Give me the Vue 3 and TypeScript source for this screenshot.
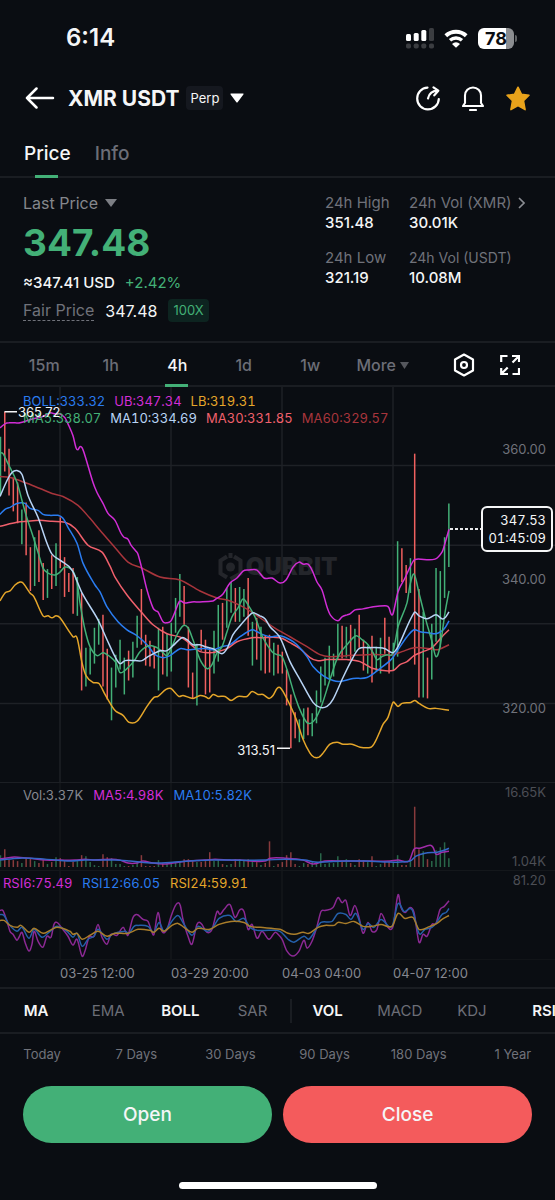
<script setup lang="ts">
import { ref } from 'vue'

type Point = [number, number]
interface Series { name: string; color: string; d: string }
interface Label { text: string; color: string }

const activeView = ref('Price')
const activeInterval = ref('4h')
const views = ['Price', 'Info']
const intervals = ['15m', '1h', '4h', '1d', '1w']
const overlays = ref([
  { name: 'MA', on: true },
  { name: 'EMA', on: false },
  { name: 'BOLL', on: true },
  { name: 'SAR', on: false },
])
const oscillators = ref([
  { name: 'VOL', on: true },
  { name: 'MACD', on: false },
  { name: 'KDJ', on: false },
  { name: 'RSI', on: true },
])
const ranges = ['Today', '7 Days', '30 Days', '90 Days', '180 Days', '1 Year']

const CHART_WIDTH = 555
const FIRST_X = 0.5
const STEP = 4.27
const VOLUME_BASE = 868

const gridX = [60, 171, 282, 393]
const gridY = [465, 545, 624, 704]
const dates = ['03-25 12:00', '03-29 20:00', '04-03 04:00', '04-07 12:00']
const percent = (x: number) => `${(x / CHART_WIDTH) * 100}%`

// One entry per candle: direction, top, bottom, top of the volume bar
const candleData = `
G 436 495 856|R 411 471 850|R 448 495 861|R 477 511 861|R 482 523 862|G 509 544 864|R 502 555 859|R 547 591 859
G 537 586 862|R 530 582 864|R 563 600 861|G 569 598 865|R 555 589 863|G 543 586 858|R 517 568 859|R 557 597 862
R 573 592 867|R 568 614 863|G 577 616 862|R 593 691 856|G 648 687 857|G 648 675 863|G 628 664 866|G 619 645 867
R 615 687 855|R 649 700 858|G 668 721 859|G 655 688 865|G 640 670 865|G 658 695 867|R 651 681 867|G 642 678 866
G 616 648 863|R 589 645 856|R 635 666 867|R 641 667 867|R 647 669 867|G 628 691 861|R 627 675 864|G 634 677 863
G 623 672 864|G 598 633 863|G 574 617 862|R 586 625 860|R 627 688 860|R 673 699 862|G 644 706 863|R 630 651 863
R 640 695 862|R 648 693 853|G 631 674 862|G 605 662 861|R 603 640 865|G 588 628 866|G 582 613 865|R 588 622 860
G 587 622 860|G 589 617 861|R 578 636 860|G 622 666 862|R 618 660 863|G 627 671 866|R 636 674 864|R 635 673 842
G 643 676 867|R 645 674 865|R 652 674 863|R 670 706 856|R 695 749 853|R 713 739 865|G 720 743 867|G 709 740 864
R 708 736 865|G 714 737 863|G 691 724 863|G 667 703 854|G 658 686 865|G 646 680 864|G 654 677 864|G 624 660 857
R 626 659 863|G 627 658 860|R 625 660 864|G 629 652 866|R 615 648 860|R 640 671 861|G 646 674 863|R 636 683 857
G 647 672 867|G 638 674 865|R 618 654 863|R 637 674 862|G 643 671 863|G 541 657 856|R 548 582 866|R 565 593 866
G 558 593 862|R 453 665 807|R 589 698 850|G 612 698 852|R 658 699 860|G 624 680 862|G 568 642 851|G 571 648 848
G 537 598 843|G 503 567 859`

const candles = candleData.trim().split(/[|\n]/).map((row, i) => {
  const [side, top, bottom, volume] = row.split(' ')
  return {
    x: FIRST_X + i * STEP,
    up: side === 'G',
    top: Number(top),
    bottom: Number(bottom),
    volume: Number(volume),
  }
})

function smooth(source: string): string {
  const p = source.trim().split(/\s+/).map((s) => s.split(',').map(Number) as Point)
  let d = `M${p[0][0]} ${p[0][1]}`
  for (let i = 0; i < p.length - 1; i++) {
    const before = p[Math.max(i - 1, 0)]
    const from = p[i]
    const to = p[i + 1]
    const after = p[Math.min(i + 2, p.length - 1)]
    const third = (to[0] - from[0]) / 3
    const slopeFrom = (to[1] - before[1]) / (to[0] - before[0] || 1)
    const slopeTo = (after[1] - from[1]) / (after[0] - from[0] || 1)
    d += `C${(from[0] + third).toFixed(1)} ${(from[1] + slopeFrom * third).toFixed(1)} `
    d += `${(to[0] - third).toFixed(1)} ${(to[1] - slopeTo * third).toFixed(1)} ${to[0]} ${to[1]}`
  }
  return d
}

const priceSeries: Series[] = [
  { name: 'MA60', color: '#a8353c', d: smooth('0,476 10,477 25,482 40,488 52,493 63,496 78,505 90,518 100,530 113,545 128,562 142,568 160,577 180,580 200,591 217,598 230,601 243,607 253,613 273,627 290,637 307,647 320,655 330,657 347,656 367,655 380,655 393,655 402,652 414,648 430,649 438,650 449,645') },
  { name: 'MA30', color: '#f0606c', d: smooth('0,526 17,522 27,521 40,520 52,521 65,522 75,528 88,545 102,552 110,566 115,577 127,595 142,613 153,625 167,634 182,638 192,646 200,652 210,653 217,652 227,649 237,642 252,638 260,638 280,638 290,643 300,649 310,658 317,661 327,660 347,660 360,662 373,669 393,671 400,665 407,662 414,656 423,652 432,648 442,637 449,630') },
  { name: 'BOLL', color: '#2a7cf0', d: smooth('0,514 5,509 10,507 17,503 25,503 30,508 38,510 43,514 50,515 58,515 63,518 68,527 77,543 83,563 95,585 100,592 107,607 118,622 127,630 137,636 147,645 155,655 163,658 170,656 180,649 187,650 200,649 207,649 213,650 222,647 230,645 240,637 252,630 257,632 263,635 270,637 280,636 290,640 297,645 307,657 313,667 323,676 333,681 340,682 353,679 367,678 380,669 392,659 398,650 407,637 414,630 420,632 428,633 436,634 442,631 445,628 449,621') },
  { name: 'MA5', color: '#43b077', d: smooth('0,452 3,453 8,463 17,482 22,500 27,518 32,533 38,552 43,568 48,573 55,575 60,572 65,567 72,570 77,582 80,603 85,630 90,647 97,656 103,653 110,657 116,663 120,673 128,668 135,660 140,652 149,646 157,648 162,652 167,656 172,647 177,635 183,626 188,628 193,640 200,660 207,669 212,665 217,653 222,647 227,632 232,617 238,608 243,599 248,605 255,617 263,638 272,652 277,655 282,657 287,670 295,697 302,715 308,724 315,720 322,705 330,680 338,657 347,645 356,636 362,640 368,645 373,653 377,660 382,657 387,655 392,655 395,643 398,627 407,603 410,585 414,574 419,593 425,617 432,642 436,657 440,647 445,613 449,591') },
  { name: 'MA10', color: '#b8d4f5', d: smooth('0,496 7,480 12,472 17,470 22,474 28,495 38,517 47,543 52,554 60,560 72,570 82,593 98,620 107,640 115,657 120,664 125,661 135,661 142,661 148,657 160,651 167,651 173,646 182,638 187,640 193,645 200,645 205,647 213,649 222,654 227,649 233,635 240,626 248,617 253,613 260,616 265,619 270,627 280,638 290,662 300,680 313,703 320,708 327,707 333,700 343,678 353,658 359,649 368,648 380,648 385,649 393,653 398,647 414,613 419,616 427,619 436,615 442,619 445,618 449,612') },
  { name: 'LB', color: '#e5a62a', d: smooth('0,601 5,593 10,591 15,585 20,582 23,583 30,593 34,597 43,616 48,616 52,618 56,616 60,618 73,637 77,638 82,663 86,676 93,683 99,684 105,695 112,707 116,712 123,716 129,723 137,722 147,707 154,698 158,697 166,690 171,689 174,692 179,697 183,696 193,699 200,696 205,697 209,699 213,695 218,697 225,697 231,701 238,697 247,697 252,692 258,695 263,695 269,699 273,696 277,689 280,688 283,692 292,710 297,722 303,740 310,754 314,758 319,758 323,754 330,745 337,743 343,745 352,745 360,748 371,748 375,743 380,732 383,725 388,718 393,703 395,704 398,707 402,704 411,703 415,701 419,704 428,709 436,709 449,711') },
  { name: 'UB', color: '#d22dd6', d: smooth('0,427 5,423 9,422 15,422 20,422 33,418 42,416 50,412 55,413 60,413 65,417 68,423 73,435 76,447 78,449 80,446 82,447 85,455 93,482 97,492 103,503 108,513 115,520 121,533 124,537 128,539 131,545 136,551 138,554 142,569 147,590 153,608 156,611 158,612 163,622 167,623 171,621 175,612 179,602 181,601 184,603 192,602 200,602 213,601 216,599 223,594 230,583 237,578 243,571 248,570 257,570 264,578 272,578 280,583 286,580 293,567 299,562 303,564 308,564 312,570 317,582 322,590 327,607 331,616 338,621 342,617 347,615 350,614 355,610 363,609 372,607 387,606 389,608 391,614 393,614 398,592 405,578 410,567 414,560 417,559 435,559 442,552 445,543 449,529') },
]

const volumeSeries: Series[] = [
  { name: 'MA5', color: '#a02ca8', d: smooth('0,860 12,858 18,858 30,859 45,861 60,861 75,861 85,860 95,861 112,860 120,861 128,864 137,864 143,862 153,864 163,865 173,864 187,862 205,861 215,860 230,861 240,861 250,862 265,862 270,859 285,859 303,861 313,865 325,862 345,862 370,862 390,862 398,861 409,862 414,850 420,849 430,846 433,848 436,855 442,853 449,852') },
  { name: 'MA10', color: '#3467c7', d: smooth('0,861 20,859 45,860 70,862 85,861 115,861 130,862 140,863 155,864 175,863 190,862 210,861 230,861 265,861 285,860 305,861 315,863 345,862 365,862 390,863 410,862 416,857 425,854 437,853 444,851 449,849') },
]

const rsiSeries: Series[] = [
  { name: 'RSI6', color: '#8b2993', d: smooth('0,911 3,911 7,922 10,932 13,935 17,941 19,938 22,933 25,943 29,952 32,945 34,932 38,942 43,948 47,937 51,938 54,925 57,923 62,929 68,937 73,946 77,940 82,957 85,952 89,938 94,937 98,925 102,938 107,945 111,935 117,936 123,928 126,933 128,936 133,918 137,915 143,920 148,922 152,933 154,935 158,913 162,932 167,930 171,917 176,905 180,905 183,920 188,937 192,945 197,925 201,924 207,933 212,930 217,912 220,915 224,910 230,905 235,918 240,910 244,912 248,930 252,925 257,939 262,932 269,940 275,933 278,935 282,940 287,952 293,957 299,952 304,941 307,949 312,942 317,927 321,912 325,911 333,908 338,898 342,903 346,901 350,916 355,906 359,918 363,934 368,923 372,932 377,930 381,914 388,928 393,927 398,895 401,908 405,913 410,908 414,913 419,943 423,935 427,937 432,925 436,924 440,910 444,907 449,901') },
  { name: 'RSI12', color: '#245fa9', d: smooth('0,915 4,916 9,925 17,932 22,928 29,939 34,930 42,938 50,932 57,927 67,932 73,938 77,934 82,947 88,940 94,937 98,930 107,940 112,935 125,932 129,934 134,927 138,926 148,927 154,933 159,923 164,932 171,923 178,916 184,925 192,936 198,927 207,932 213,928 219,919 230,916 236,922 244,919 250,928 257,931 270,931 280,932 288,940 294,943 304,937 309,940 316,930 321,923 332,922 338,914 346,915 351,920 356,914 363,930 368,924 374,928 381,920 392,927 398,904 404,912 412,910 419,934 425,930 432,928 436,924 442,915 446,913 449,909') },
  { name: 'RSI24', color: '#a97d2a', d: smooth('0,921 4,921 10,926 17,928 21,926 29,933 34,929 43,934 50,931 57,928 70,932 73,935 77,934 82,940 90,936 98,932 107,937 115,934 128,934 138,930 150,931 154,933 159,929 164,932 172,926 178,924 184,928 192,933 198,929 210,930 219,925 231,922 244,923 250,927 260,928 280,930 288,934 295,935 303,933 309,934 318,928 325,926 334,926 338,923 346,924 354,922 363,927 372,927 381,925 392,927 398,914 405,919 413,918 419,930 430,927 437,924 442,920 449,916') },
]

const bollLabels: Label[] = [
  { text: 'BOLL:333.32', color: 'blue' },
  { text: 'UB:347.34', color: 'magenta' },
  { text: 'LB:319.31', color: 'amber' },
]
const maLabels: Label[] = [
  { text: 'MA5:338.07', color: 'green' },
  { text: 'MA10:334.69', color: 'sky' },
  { text: 'MA30:331.85', color: 'rose' },
  { text: 'MA60:329.57', color: 'wine' },
]
const volumeLabels: Label[] = [
  { text: 'Vol:3.37K', color: 'grey' },
  { text: 'MA5:4.98K', color: 'magenta' },
  { text: 'MA10:5.82K', color: 'blue' },
]
const rsiLabels: Label[] = [
  { text: 'RSI6:75.49', color: 'magenta' },
  { text: 'RSI12:66.05', color: 'blue' },
  { text: 'RSI24:59.91', color: 'amber' },
]
</script>

<template>
  <div class="screen">
    <div class="status">
      <span class="clock">6:14</span>
      <div class="status-icons">
        <svg width="28" height="21" viewBox="0 0 28 21" aria-hidden="true">
          <g fill="#fff">
            <rect x="0" y="6" width="5" height="7" rx="1.5" />
            <rect x="7.7" y="5" width="5" height="8" rx="1.5" />
            <rect x="15.3" y="2" width="5" height="11" rx="1.5" />
          </g>
          <g fill="#3b3d41">
            <rect x="23" y="0" width="5" height="13" rx="1.5" />
            <rect x="0" y="15.5" width="5" height="5" rx="1.8" />
            <rect x="7.7" y="15.5" width="5" height="5" rx="1.8" />
            <rect x="15.3" y="15.5" width="5" height="5" rx="1.8" />
            <rect x="23" y="15.5" width="5" height="5" rx="1.8" />
          </g>
        </svg>
        <svg width="24" height="19" viewBox="0 0 24 19" aria-hidden="true">
          <path d="M1.8 6.8a15 15 0 0 1 20.4 0" fill="none" stroke="#fff" stroke-width="4" />
          <path d="M6 11.3a9 9 0 0 1 12 0" fill="none" stroke="#fff" stroke-width="3.4" />
          <path d="M8 14.9a6 6 0 0 1 8 0L12 18.8Z" fill="#fff" />
        </svg>
        <div class="battery"><span>78</span></div>
      </div>
    </div>

    <header class="header">
      <button class="icon-button" aria-label="Back">
        <svg width="30" height="22" viewBox="0 0 30 22" fill="none" stroke="#fff" stroke-width="2.5" stroke-linecap="round" stroke-linejoin="round">
          <path d="M28 11H2M11.5 1.5L2 11l9.5 9.5" />
        </svg>
      </button>
      <button class="pair">
        <span class="pair-name">XMR USDT</span>
        <span class="perp">Perp</span>
        <svg width="14" height="10" viewBox="0 0 14 10" aria-hidden="true"><path d="M1 0.5h12q1 0 .4.9l-5.6 7.7q-.8 1-1.6 0L.6 1.4q-.6-.9.4-.9Z" fill="#fff" /></svg>
      </button>
      <div class="header-actions">
        <button class="icon-button" aria-label="Share">
          <svg width="24" height="25" viewBox="0 0 24 25" fill="none" stroke="#fff" stroke-width="2.2" stroke-linecap="round" stroke-linejoin="round">
            <path d="M11.5 1.6C5.5 1.9 1.2 6.5 1.2 12.5c0 6.2 4.7 10.9 10.6 10.9s10.8-4.6 11-10.4" />
            <path d="M12 12.5c1-4.5 4.5-7.8 10-7.8M17.5 1.3L22.3 4.7L18.3 9.3" />
          </svg>
        </button>
        <button class="icon-button" aria-label="Price alerts">
          <svg width="22" height="25" viewBox="0 0 22 25" fill="none" stroke="#fff" stroke-width="2.1" stroke-linecap="round" stroke-linejoin="round">
            <path d="M3 17V9.5a8 8 0 0 1 16 0V17l2 3H1Z" /><path d="M8 24h6" />
          </svg>
        </button>
        <button class="icon-button" aria-label="Favourite">
          <svg width="24" height="25" viewBox="0 0 24 25"><path d="M12 1.2l3.4 7 7.6 1.1-5.5 5.4 1.6 9-7.1-4-7.1 4 1.6-9L1 9.3l7.6-1.1Z" fill="#e9a31b" stroke="#e9a31b" stroke-width="1.5" stroke-linejoin="round" /></svg>
        </button>
      </div>
    </header>

    <nav class="views">
      <button v-for="v in views" :key="v" :class="{ active: v === activeView }" @click="activeView = v">{{ v }}</button>
    </nav>

    <section class="summary">
      <div class="price-block">
        <button class="last-label">
          Last Price
          <svg width="12" height="8" viewBox="0 0 12 8" aria-hidden="true"><path d="M0 0h12L6 8Z" fill="#7c7e84" /></svg>
        </button>
        <strong class="last-price">347.48</strong>
        <div class="usd"><span>≈347.41 USD</span><span class="green">+2.42%</span></div>
        <div class="fair"><span class="fair-label">Fair Price</span><span>347.48</span><span class="leverage">100X</span></div>
      </div>
      <dl class="stats">
        <div><dt>24h High</dt><dd>351.48</dd></div>
        <div>
          <dt>24h Vol (XMR)
            <svg width="7" height="12" viewBox="0 0 7 12" fill="none" stroke="#8b8d93" stroke-width="1.6" aria-hidden="true"><path d="M1 1l5 5-5 5" /></svg>
          </dt>
          <dd>30.01K</dd>
        </div>
        <div><dt>24h Low</dt><dd>321.19</dd></div>
        <div><dt class="compact">24h Vol (USDT)</dt><dd>10.08M</dd></div>
      </dl>
    </section>

    <nav class="intervals">
      <button v-for="t in intervals" :key="t" :class="{ active: t === activeInterval }" @click="activeInterval = t">{{ t }}</button>
      <button class="more">More<svg width="9" height="7" viewBox="0 0 9 7" aria-hidden="true"><path d="M0 0h9L4.5 7Z" fill="#55575d" /></svg></button>
      <div class="chart-tools">
        <button class="icon-button" aria-label="Chart settings">
          <svg width="22" height="24" viewBox="0 0 22 24" fill="none" stroke="#fff" stroke-width="2.2" stroke-linejoin="round">
            <path d="M11 1.5l9 5v11l-9 5-9-5v-11Z" /><circle cx="11" cy="12" r="3" />
          </svg>
        </button>
        <button class="icon-button" aria-label="Full screen">
          <svg width="20" height="22" viewBox="0 0 20 22" fill="none" stroke="#fff" stroke-width="2.2">
            <path d="M7.5 2H1.2v6M19 14v6h-6.5M12 2h7v6M1.2 14v6H8M19 2l-6.5 6.5M1.2 20l6.5-6.5" />
          </svg>
        </button>
      </div>
    </nav>

    <section class="chart" aria-label="XMR USDT 4h chart">
      <div class="panel price-panel">
        <div class="watermark" aria-hidden="true">
          <svg width="25" height="28" viewBox="0 0 25 28" fill="none" stroke="#24262b" stroke-width="4">
            <path d="M9 3.5L2.5 7.5v13L9 24.5M16 3.5l6.5 4v13L12.5 26" />
            <circle cx="12.5" cy="14" r="4.5" fill="#24262b" stroke="none" /><path d="M12.5 0v5" />
          </svg>
          <span>QURBIT</span>
        </div>
        <svg class="plot" viewBox="0 386 555 397" preserveAspectRatio="none" aria-hidden="true">
          <line v-for="x in gridX" :key="'x' + x" class="grid" :x1="x" :x2="x" y1="386" y2="783" />
          <line v-for="y in gridY" :key="'y' + y" class="grid" x1="0" x2="555" :y1="y" :y2="y" />
          <line v-for="c in candles" :key="c.x" :class="c.up ? 'up' : 'down'" :x1="c.x" :x2="c.x" :y1="c.top" :y2="c.bottom" />
          <path v-for="s in priceSeries" :key="s.name" :d="s.d" :stroke="s.color" />
          <path class="marker" d="M4.5 411H17M277 749H290" />
        </svg>
        <div class="legend">
          <div><span v-for="l in bollLabels" :key="l.text" :class="l.color">{{ l.text }}</span></div>
          <div><span v-for="l in maLabels" :key="l.text" :class="l.color">{{ l.text }}</span></div>
        </div>
        <span class="extreme high" :style="{ left: percent(18) }">365.72</span>
        <span class="extreme low" :style="{ right: percent(280) }">313.51</span>
        <div class="scale price-scale"><span>360.00</span><span>340.00</span><span>320.00</span></div>
        <div class="current">
          <i></i>
          <div class="current-tag"><span>347.53</span><span>01:45:09</span></div>
        </div>
      </div>

      <div class="panel volume-panel">
        <svg class="plot" viewBox="0 783 555 88" preserveAspectRatio="none" aria-hidden="true">
          <line v-for="x in gridX" :key="x" class="grid faint" :x1="x" :x2="x" y1="783" y2="871" />
          <line v-for="c in candles" :key="c.x" class="volume" :class="c.up ? 'up' : 'down'" :x1="c.x" :x2="c.x" :y1="c.volume" :y2="VOLUME_BASE" />
          <path v-for="s in volumeSeries" :key="s.name" :d="s.d" :stroke="s.color" />
        </svg>
        <div class="legend"><div><span v-for="l in volumeLabels" :key="l.text" :class="l.color">{{ l.text }}</span></div></div>
        <div class="scale dim"><span>16.65K</span><span>1.04K</span></div>
      </div>

      <div class="panel rsi-panel">
        <svg class="plot" viewBox="0 871 555 89" preserveAspectRatio="none" aria-hidden="true">
          <line v-for="x in gridX" :key="x" class="grid faint" :x1="x" :x2="x" y1="871" y2="960" />
          <path v-for="s in rsiSeries" :key="s.name" :d="s.d" :stroke="s.color" />
        </svg>
        <div class="legend"><div><span v-for="l in rsiLabels" :key="l.text" :class="l.color">{{ l.text }}</span></div></div>
        <div class="scale dim"><span>81.20</span></div>
      </div>

      <div class="dates"><time v-for="d in dates" :key="d">{{ d }}</time></div>
    </section>

    <div class="indicators">
      <button v-for="o in overlays" :key="o.name" :class="{ active: o.on }" @click="o.on = !o.on">{{ o.name }}</button>
      <i class="divider"></i>
      <button v-for="o in oscillators" :key="o.name" :class="{ active: o.on }" @click="o.on = !o.on">{{ o.name }}</button>
    </div>

    <div class="ranges"><button v-for="r in ranges" :key="r">{{ r }}</button></div>

    <div class="trade">
      <button class="open">Open</button>
      <button class="close">Close</button>
    </div>
    <div class="home-bar"></div>
  </div>
</template>

<style>
body { margin: 0; background: #0a0d12; }
</style>

<style scoped>
* { box-sizing: border-box; }
.screen {
  min-height: 100vh;
  overflow: hidden;
  display: flex;
  flex-direction: column;
  background: #0a0d12;
  color: #f5f6f7;
  font-family: Inter, "Liberation Sans", sans-serif;
  font-size: 15px;
}
button { margin: 0; padding: 0; border: 0; background: none; color: inherit; font: inherit; cursor: pointer; }
svg { display: block; flex: none; }
.icon-button { display: block; }

.status { display: flex; justify-content: space-between; align-items: center; height: 74px; padding: 0 41px 0 66px; }
.clock { font-size: 24px; font-weight: 600; }
.status-icons { display: flex; align-items: center; gap: 10px; padding-top: 3px; }
.battery {
  position: relative;
  width: 36px;
  height: 21px;
  border-radius: 6px;
  background: linear-gradient(90deg, #fff 78%, #8b8d90 78%);
  color: #0a0d12;
  font-size: 18px;
  font-weight: 700;
  line-height: 21px;
  text-align: center;
}
.battery::after { content: ""; position: absolute; right: -3px; top: 7px; width: 2px; height: 7px; border-radius: 0 2px 2px 0; background: #606265; }

.header { display: flex; align-items: center; height: 48px; padding: 0 25px; }
.pair { display: flex; align-items: center; gap: 7px; margin-left: 13px; }
.pair-name { font-size: 21px; font-weight: 700; }
.perp { padding: 0 4px; border-radius: 4px; background: #15181f; font-size: 13px; line-height: 24px; }
.header-actions { display: flex; align-items: center; gap: 22px; margin-left: auto; }

.views { display: flex; gap: 24px; height: 56px; padding: 0 24px; border-bottom: 2px solid #1a1d22; }
.views button { position: relative; padding-top: 8px; font-size: 19px; font-weight: 500; color: #6c6e77; }
.views .active, .intervals .active { color: #f5f6f7; }
.views .active::after, .intervals .active::after {
  content: ""; position: absolute; left: 50%; bottom: -2px; width: 23px; height: 3px; margin-left: -12px; background: #43b077;
}

.summary { display: flex; justify-content: space-between; height: 165px; padding: 13px 23px 0; border-bottom: 2px solid #1a1d22; }
.price-block { display: flex; flex-direction: column; align-items: flex-start; }
.last-label { display: flex; align-items: center; gap: 7px; color: #85878c; font-size: 16px; line-height: 24px; }
.last-price { color: #43b077; font-size: 37px; line-height: 56px; }
.usd { display: flex; gap: 10px; font-weight: 500; line-height: 24px; }
.green { color: #43b077; }
.usd .green { font-weight: 400; }
.fair { display: flex; align-items: center; gap: 11px; height: 31px; font-size: 16px; }
.fair-label { border-bottom: 1px dashed #70727a; color: #70727a; line-height: 20px; }
.leverage { padding: 0 5px; border-radius: 4px; background: #0d2420; color: #43b077; font-size: 13px; line-height: 23px; }
.stats { display: grid; grid-template-columns: 84px 123px; align-content: start; row-gap: 15px; margin: 0; padding-top: 2px; line-height: 20px; white-space: nowrap; }
.stats dt { display: flex; align-items: center; gap: 6px; color: #70727a; }
.stats .compact { font-size: 14px; }
.stats dd { margin: 0; font-weight: 500; }

.intervals { display: grid; grid-template-columns: repeat(5, 66fr) 78fr 132fr; height: 44px; padding-left: 11px; border-bottom: 2px solid #1a1d22; color: #6c6e77; font-size: 16px; }
.intervals > button { position: relative; padding-top: 2px; font-weight: 500; }
.intervals .more { display: flex; align-items: center; justify-content: center; gap: 4px; }
.chart-tools { display: flex; align-items: center; justify-content: flex-end; gap: 25px; padding: 2px 35px 0 0; }

.chart { font-size: 13px; }
.panel { position: relative; border-bottom: 1px solid #1c1f24; }
.price-panel { height: 396px; }
.volume-panel { height: 88px; border-color: #14171b; }
.rsi-panel { height: 89px; border-color: #111418; }
.plot { position: absolute; left: 0; top: 0; width: 100%; height: 100%; }
.plot path { fill: none; stroke-width: 1.5px; stroke-linejoin: round; vector-effect: non-scaling-stroke; }
.plot line { vector-effect: non-scaling-stroke; stroke-width: 1.5px; }
.plot .grid { stroke: #1e2126; }
.plot .faint { stroke: #14171b; }
.plot .up { stroke: #43b077; }
.plot .down { stroke: #f0605f; }
.plot .volume { opacity: 0.55; }
.plot .marker { stroke: #f5f6f7; }
.watermark { position: absolute; left: 0; right: 0; top: 165px; display: flex; align-items: center; justify-content: center; gap: 3px; color: #24262b; font-size: 24px; line-height: 30px; font-weight: 900; }
.legend { position: relative; padding: 4px 23px 0; line-height: 17px; white-space: nowrap; font-variant-numeric: tabular-nums; }
.price-panel .legend { padding-top: 6px; }
.rsi-panel .legend { padding-left: 3px; }
.legend div { display: flex; gap: 10px; }
.price-panel .legend div { gap: 9px; }
.blue { color: #2a7cf0; }
.magenta { color: #d22dd6; }
.amber { color: #e5a62a; }
.sky { color: #b8d4f5; }
.rose { color: #f0606c; }
.wine { color: #a8353c; }
.grey { color: #868890; }
.extreme { position: absolute; line-height: 16px; color: #f5f6f7; }
.high { top: 17px; }
.low { top: 355px; }
.scale { position: absolute; top: 0; right: 9px; bottom: 0; display: flex; flex-direction: column; justify-content: space-between; align-items: flex-end; color: #70727a; line-height: 18px; }
.price-scale { top: 53px; bottom: 65px; }
.dim { color: #4c4e55; }
.current { position: absolute; left: 81%; right: 2px; top: 119px; display: flex; align-items: center; }
.current i { flex: 1; height: 2px; background: repeating-linear-gradient(90deg, #e6e7e9 0 3px, transparent 3px 5px); }
.current-tag { display: flex; flex-direction: column; align-items: flex-end; padding: 3px 5px; border: 2px solid #f5f6f7; border-radius: 6px; background: #0a0d12; line-height: 18px; font-variant-numeric: tabular-nums; }
.dates { display: grid; grid-template-columns: 60fr repeat(3, 111fr) 162fr; height: 29px; border-bottom: 2px solid #1a1d22; color: #868890; line-height: 27px; white-space: nowrap; }
.dates time:first-child { grid-column: 2; }

.indicators { display: flex; align-items: center; height: 45px; border-bottom: 2px solid #1a1d22; color: #6c6e77; }
.indicators button { flex: 0 0 13%; }
.indicators .active { color: #f5f6f7; font-weight: 600; }
.divider { flex: none; width: 2px; height: 24px; margin-left: 1px; background: #1a1d22; }
.ranges { display: grid; grid-template-columns: repeat(6, 1fr); margin: 0 -5px; height: 39px; color: #70727a; font-size: 13px; }
.trade { display: grid; grid-template-columns: 1fr 1fr; gap: 11px; padding: 13px 23px 0; }
.trade button { height: 57px; border-radius: 29px; font-size: 19px; font-weight: 500; }
.open { background: #43b077; }
.close { background: #f45b5c; }
.home-bar { width: 198px; height: 7px; margin: auto auto 11px; border-radius: 4px; background: #fff; }
</style>
